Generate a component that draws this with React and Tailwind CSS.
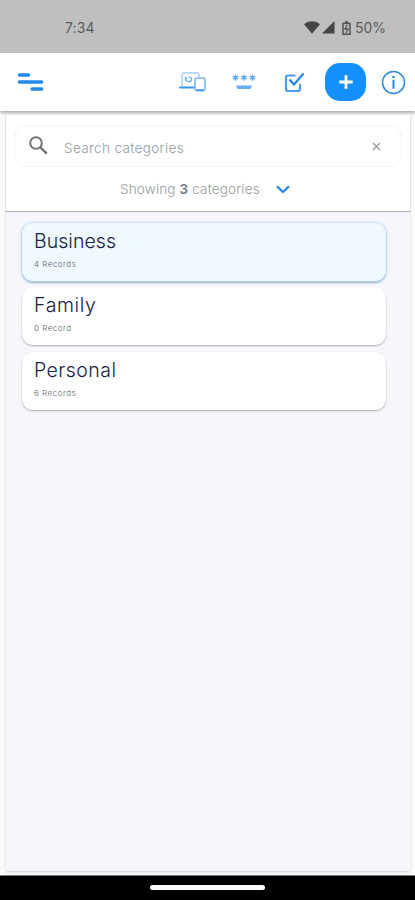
import { useState } from "react";

const CATEGORIES = [
  { name: "Business", records: "4 Records", tracking: "tracking-[0.05px]" },
  { name: "Family", records: "0 Record", tracking: "tracking-[0.6px]" },
  { name: "Personal", records: "6 Records", tracking: "tracking-[0.45px]" },
];

function StatusBar() {
  return (
    <div className="flex h-[53px] shrink-0 items-center bg-[#bfbfbf] pt-[2px] pr-[29px] pl-[65px] text-[#5a5a5a]">
      <span className="text-[14px] tracking-[0.1px]">7:34</span>
      <div className="ml-auto flex items-center">
        <svg width="16" height="13" viewBox="0 0 16 13" fill="#454545">
          <path d="M0 3.2C4.5-.8 11.5-.8 16 3.2L8 12.8Z" />
        </svg>
        <svg className="ml-[2px]" width="13" height="13" viewBox="0 0 13 13" fill="#454545">
          <path d="M12.5 0v12.5H0Z" />
        </svg>
        <svg className="ml-[7px]" width="9" height="14" viewBox="0 0 9 14" fill="none" stroke="#505050">
          <path d="M2.8 1h3.4M1 2.5h7v10.8H1Z" strokeWidth="1.5" />
          <path d="M5.2 4 3 8h3l-2 4" strokeWidth="1.3" />
        </svg>
        <span className="ml-[4px] w-[31px] text-[14px] whitespace-nowrap">50%</span>
      </div>
    </div>
  );
}

function DevicesIcon() {
  return (
    <svg width="27" height="20" viewBox="0 0 27 20" fill="none">
      <path d="M3 14V3q0-2 2-2h13q2 0 2 2v2" stroke="#a3cdfa" strokeWidth="1.4" />
      <path d="M1 15.5h14" stroke="#3894ed" strokeWidth="2" strokeLinecap="round" />
      <path d="M6.2 6.5c.5 3.5 5.5 4.5 6.5 1M6 5.5l2.5 1.2M10 5.2c2 0 3 1.2 2.5 3" stroke="#65adf5" strokeWidth="1.3" />
      <rect x="16" y="6" width="10" height="12.5" rx="2" fill="#fff" stroke="#72b3f6" strokeWidth="1.5" />
      <path d="M17.5 18.3h7.5" stroke="#3894ed" strokeWidth="1.8" />
    </svg>
  );
}

function PasswordIcon() {
  return (
    <svg width="24" height="16" viewBox="0 0 24 16" fill="none" stroke="#60aaf5">
      {[3.5, 12, 20.5].map((x) => (
        <path key={x} d={`M${x} .7v6M${x - 2.6} 2.2l5.2 3M${x - 2.6} 5.2l5.2-3`} strokeWidth="1.4" />
      ))}
      <path d="M4 11.5h16l-1.5 3.5h-13Z" fill="#65adf5" stroke="none" />
    </svg>
  );
}

function Header() {
  return (
    <header className="relative z-10 flex h-[58px] shrink-0 items-center bg-white shadow-[0_2px_3px_rgba(0,0,0,0.32)]">
      <button type="button" aria-label="Menu" className="ml-[17px]">
        <svg width="27" height="20" viewBox="0 0 27 20" stroke="#2489e6" strokeWidth="3.4" strokeLinecap="round">
          <path d="M2.4 3h9.3M2.4 10h22.2M15 17h9.6" />
        </svg>
      </button>
      <div className="ml-auto flex items-center">
        <button type="button" aria-label="Devices"><DevicesIcon /></button>
        <button type="button" aria-label="Passwords" className="ml-[26px]"><PasswordIcon /></button>
        <button type="button" aria-label="Select" className="ml-[28px]">
          <svg width="21" height="21" viewBox="0 0 21 21" fill="none">
            <path d="M11.5 3.5H4Q2 3.5 2 5.5v12Q2 19 3.8 19H14q2 0 2-2v-5" stroke="#4a9eef" strokeWidth="2.2" />
            <path d="m5.5 7.5 4.5 5L19.5 1.5" stroke="#2588e5" strokeWidth="2.3" />
          </svg>
        </button>
        <button
          type="button"
          aria-label="Add"
          className="ml-[20px] flex h-[38px] w-[41px] items-center justify-center rounded-[15px] bg-[#1790ff]"
        >
          <svg width="14" height="14" viewBox="0 0 14 14" stroke="#fff" strokeWidth="2.8">
            <path d="M7 .3v13.4M.3 7h13.4" />
          </svg>
        </button>
        <button type="button" aria-label="Info" className="mr-[9px] ml-[15px]">
          <svg width="25" height="25" viewBox="0 0 25 25" fill="none" stroke="#2787e4">
            <circle cx="12.5" cy="12.5" r="11" strokeWidth="1.5" />
            <path d="M12.5 9.8v9" strokeWidth="2" />
            <circle cx="12.5" cy="7" r="1.3" fill="#2787e4" stroke="none" />
          </svg>
        </button>
      </div>
    </header>
  );
}

function SearchPanel({ query, setQuery }) {
  return (
    <div className="h-[96px] bg-white px-[8px] pt-[10px] shadow-[0_1px_1px_rgba(0,0,0,0.28)]">
      <div className="flex h-[42px] items-center rounded-[12px] border border-[#f3f3f4]">
        <svg className="mb-[2px] ml-[13px] shrink-0" width="21" height="21" viewBox="0 0 21 21" fill="none" stroke="#747474">
          <circle cx="8" cy="8" r="5.8" strokeWidth="2" />
          <path d="m12.2 12.2 6.6 6.5" strokeWidth="2.4" />
        </svg>
        <input
          value={query}
          onChange={(e) => setQuery(e.target.value)}
          placeholder="Search categories"
          className="mt-[4px] ml-[15px] w-0 min-w-0 flex-1 text-[13.5px] font-light tracking-[0.37px] text-[#8d979d] outline-none placeholder:text-[#929ba1]"
        />
        <button type="button" aria-label="Clear" onClick={() => setQuery("")} className="mr-[20px]">
          <svg width="9" height="9" viewBox="0 0 9 9" stroke="#999" strokeWidth="1.3">
            <path d="m1 1 7 7M8 1 1 8" />
          </svg>
        </button>
      </div>
      <div className="flex h-[45px] items-center pl-[106px] text-[13.5px] font-light text-[#929ba1]">
        <span className="w-[140px] tracking-[0.16px] whitespace-nowrap">
          Showing <b className="font-semibold text-[#6c7d88]">3</b> categories
        </span>
        <svg className="ml-[16px]" width="14" height="9" viewBox="0 0 14 9" fill="none" stroke="#2788ed" strokeWidth="2.3">
          <path d="m1 1.3 6 5.7 6-5.7" />
        </svg>
      </div>
    </div>
  );
}

function CategoryCard({ category, selected, onSelect }) {
  return (
    <button
      type="button"
      onClick={onSelect}
      className={
        selected
          ? "flex h-[58px] w-full flex-col items-start rounded-[11px] bg-[#eff8ff] px-[12px] pt-[6px] text-left shadow-[0_0_2px_1px_#bcdaf2,0_2px_2px_#8caac5]"
          : "flex h-[58px] w-full flex-col items-start rounded-[11px] bg-white px-[12px] pt-[6px] text-left shadow-[0_1px_2px_rgba(0,0,0,0.3)]"
      }
    >
      <span className={`text-[19.5px] leading-[25px] font-light text-[#18213f] ${category.tracking}`}>
        {category.name}
      </span>
      <span className="mt-[4px] text-[8px] leading-[12px] font-light tracking-[0.5px] text-[#606368]">
        {category.records}
      </span>
    </button>
  );
}

export default function App() {
  const [query, setQuery] = useState("");
  const [selected, setSelected] = useState("Business");
  const visible = CATEGORIES.filter((c) => c.name.toLowerCase().includes(query.toLowerCase()));

  return (
    <div className="flex h-[900px] w-[415px] flex-col overflow-hidden bg-[#fafafa] font-['Inter',sans-serif]">
      <StatusBar />
      <Header />
      <main className="mt-[4px] mr-[5px] mb-[4px] ml-[6px] min-h-0 flex-1 bg-[#f6f6fc] shadow-[0_1px_2px_rgba(0,0,0,0.18)]">
        <SearchPanel query={query} setQuery={setQuery} />
        <div className="flex flex-col gap-[6.7px] pt-[11.5px] pr-[24px] pl-[16px]">
          {visible.map((category) => (
            <CategoryCard
              key={category.name}
              category={category}
              selected={category.name === selected}
              onSelect={() => setSelected(category.name)}
            />
          ))}
        </div>
      </main>
      <div className="flex h-[25px] shrink-0 items-center justify-center border-t border-[#777] bg-black">
        <div className="mb-[1px] h-[5px] w-[115px] rounded-full bg-white" />
      </div>
    </div>
  );
}
